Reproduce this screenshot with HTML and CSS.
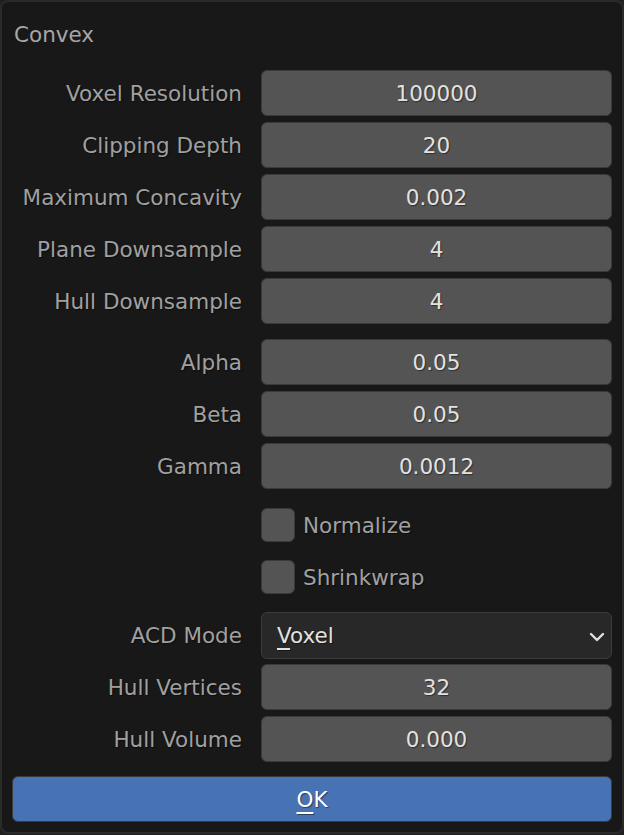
FILE: index.html
```html
<!DOCTYPE html>
<html>
<head>
<meta charset="utf-8">
<link rel="stylesheet" href="styles.css">
</head>
<body>
<div class="panel">
  <div class="title">Convex</div>
  <div class="group g1">
    <div class="row"><div class="label">Voxel Resolution</div><div class="field">100000</div></div>
    <div class="row"><div class="label">Clipping Depth</div><div class="field">20</div></div>
    <div class="row"><div class="label">Maximum Concavity</div><div class="field">0.002</div></div>
    <div class="row"><div class="label">Plane Downsample</div><div class="field">4</div></div>
    <div class="row"><div class="label">Hull Downsample</div><div class="field">4</div></div>
  </div>
  <div class="group g2">
    <div class="row"><div class="label">Alpha</div><div class="field">0.05</div></div>
    <div class="row"><div class="label">Beta</div><div class="field">0.05</div></div>
    <div class="row"><div class="label">Gamma</div><div class="field">0.0012</div></div>
  </div>
  <div class="group g3">
    <div class="row"><div class="label"></div><div class="check"><span class="box"></span><span class="clabel">Normalize</span></div></div>
    <div class="row"><div class="label"></div><div class="check"><span class="box"></span><span class="clabel">Shrinkwrap</span></div></div>
  </div>
  <div class="group g4">
    <div class="row"><div class="label">ACD Mode</div><div class="select"><span><span class="u">V</span>oxel</span>
      <svg class="chev" width="16" height="10" viewBox="0 0 16 10"><path d="M2 2 L8 8 L14 2" fill="none" stroke="#e2e2e2" stroke-width="2.4" stroke-linecap="round" stroke-linejoin="round"/></svg></div></div>
    <div class="row"><div class="label">Hull Vertices</div><div class="field">32</div></div>
    <div class="row"><div class="label">Hull Volume</div><div class="field">0.000</div></div>
  </div>
  <div class="ok"><span><span class="u">O</span>K</span></div>
</div>
</body>
</html>
```
FILE: styles.css
```css
html, body {
  margin: 0;
  padding: 0;
  background: #1f1f1f;
}
body {
  width: 624px;
  height: 835px;
  font-family: "DejaVu Sans", "Liberation Sans", sans-serif;
  font-size: 21.5px;
}
.panel {
  box-sizing: border-box;
  width: 624px;
  height: 834px;
  background: #181818;
  border: 2px solid #2a2a2a;
  border-radius: 8px;
  padding: 18px 10px 0 10px;
  display: flex;
  flex-direction: column;
}
.title {
  color: #a6a6a6;
  line-height: 30px;
  height: 30px;
  padding-left: 2px;
}
.group {
  display: flex;
  flex-direction: column;
  gap: 6px;
}
.g1 { margin-top: 20px; }
.g2 { margin-top: 15px; }
.g3 { margin-top: 13px; }
.g4 { margin-top: 12px; }
.row {
  display: grid;
  grid-template-columns: 230px 351px;
  column-gap: 19px;
  height: 46px;
  align-items: center;
}
.label {
  color: #a0a0a0;
  text-align: right;
  white-space: nowrap;
  text-shadow: 1px 1px 1px rgba(0,0,0,0.5);
}
.field {
  box-sizing: border-box;
  height: 46px;
  background: #545454;
  border: 1px solid #3a3a3a;
  border-radius: 6px;
  color: #e2e2e2;
  display: flex;
  align-items: center;
  justify-content: center;
  text-shadow: 1px 1px 1px rgba(0,0,0,0.45);
}
.check {
  display: flex;
  align-items: center;
  gap: 8px;
}
.box {
  box-sizing: border-box;
  width: 34px;
  height: 34px;
  background: #545454;
  border: 1px solid #3a3a3a;
  border-radius: 6px;
}
.clabel {
  color: #a0a0a0;
  text-shadow: 1px 1px 1px rgba(0,0,0,0.5);
}
.select {
  box-sizing: border-box;
  height: 47px;
  background: #282828;
  border: 1px solid #3c3c3c;
  border-radius: 6px;
  color: #e2e2e2;
  display: flex;
  align-items: center;
  justify-content: space-between;
  padding: 0 6px 0 15px;
  text-shadow: 1px 1px 1px rgba(0,0,0,0.45);
}
.chev {
  display: block;
  margin-top: 2px;
}
.u {
  text-decoration: underline;
  text-decoration-thickness: 2px;
  text-underline-offset: 5px;
}
.ok {
  box-sizing: border-box;
  margin-top: 14px;
  height: 46px;
  background: #4772b3;
  border: 1px solid #3a3a3a;
  border-radius: 6px;
  color: #ffffff;
  display: flex;
  align-items: center;
  justify-content: center;
  text-shadow: 1px 1px 1px rgba(0,0,0,0.45);
}
```
